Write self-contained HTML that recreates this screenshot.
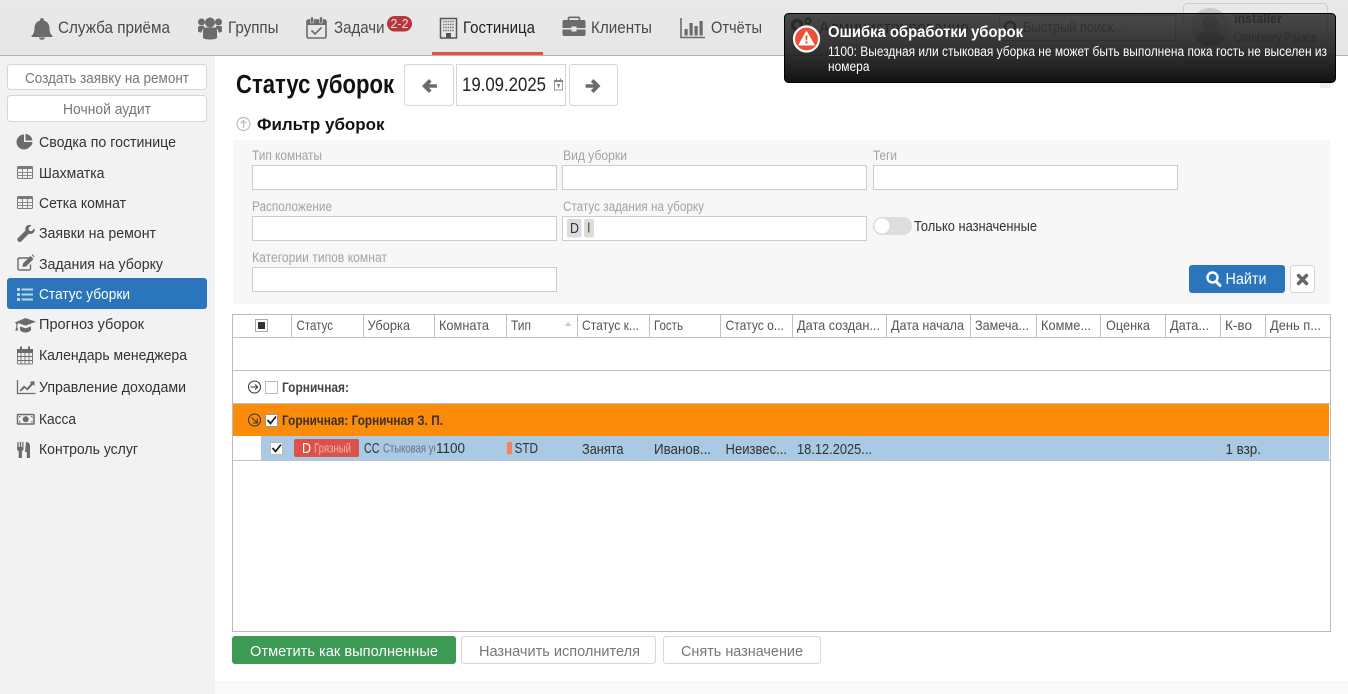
<!DOCTYPE html>
<html lang="ru"><head><meta charset="utf-8"><title>Статус уборок</title>
<style>
html,body{margin:0;padding:0;background:#fff;width:1348px;height:694px;overflow:hidden}
svg{display:block}
text{font-family:"Liberation Sans",sans-serif;font-size:14px;fill:#333;white-space:pre}
.nav{font-size:17px;fill:#4a4a4a}
.side{font-size:15px;fill:#333}
.btn{font-size:15px;fill:#777}
.lab{font-size:13.5px;fill:#a3a3a3}
.th{font-size:14px;fill:#555}
.td{font-size:14.5px;fill:#333}
.i{fill:#6b6b6b}
.s{fill:none;stroke:#6b6b6b}
.box{fill:#fff;stroke:#d6d6d6}
.inp{fill:#fff;stroke:#ccc}
.line{stroke:#c2c2c2;stroke-width:1}
</style></head>
<body>
<svg xmlns="http://www.w3.org/2000/svg" width="1348" height="694" viewBox="0 0 1348 694">
<defs>
<linearGradient id="hd" x1="0" y1="0" x2="0" y2="1"><stop offset="0" stop-color="#e9e9e9"/><stop offset="1" stop-color="#e6e6e6"/></linearGradient>
<linearGradient id="toast" x1="0" y1="0" x2="0" y2="1"><stop offset="0" stop-color="#2b2b2b" stop-opacity=".84"/><stop offset=".55" stop-color="#1c1c1c" stop-opacity=".9"/><stop offset="1" stop-color="#000" stop-opacity=".93"/></linearGradient>
<clipPath id="cl"><rect x="380" y="436" width="55" height="24"/></clipPath>
<symbol id="grid" viewBox="0 0 16 13"><rect x=".5" y=".5" width="15" height="12" rx="1" fill="none" stroke="#7a7a7a"/><path d="M0 1h16v2H0z" fill="#7a7a7a"/><path d="M5.500 3v10M10.500 3v10M0 6.500h16M0 9.500h16" stroke="#8a8a8a" fill="none"/></symbol>
</defs>

<!-- header -->
<rect width="1348" height="55" fill="url(#hd)"/>
<rect y="55" width="1348" height="1" fill="#b3b3b3"/>
<rect x="432" y="52" width="111" height="3" fill="#e9503e"/>

<!-- bell -->
<path class="i" d="M42 18c-1.100 0-1.900.8-1.900 1.900v.6c-3.600 1-5.600 3.900-5.600 7.800 0 3.700-.9 5.900-3 7.700v1h21v-1c-2.100-1.800-3-4-3-7.700 0-3.900-2-6.800-5.600-7.800v-.6c0-1.100-.8-1.900-1.900-1.900zM39 37.500a3 2.300 0 0 0 6 0z"/>
<text class="nav" x="58" y="33" textLength="112" lengthAdjust="spacingAndGlyphs">Служба приёма</text>
<!-- users -->
<g class="i"><circle cx="210" cy="22.500" r="5"/><circle cx="201.500" cy="22" r="3.500"/><circle cx="218.500" cy="22" r="3.500"/><path d="M203 31c0-2.500 2-3.500 3.500-3.500h7c1.500 0 3.500 1 3.500 3.500v7c-1 1-3.500 1.500-7 1.500s-6-.5-7-1.500zM198 27c0-.8 1-1 2-1h3.800c.3 1 .8 1.500 1.200 2-2 .7-3.300 2-3.500 4.500-2 0-3.500-.5-3.500-1.500zM222 27c0-.8-1-1-2-1h-3.800c-.3 1-.8 1.500-1.200 2 2 .7 3.300 2 3.500 4.500 2 0 3.500-.5 3.500-1.500z"/></g>
<text class="nav" x="228" y="33" textLength="50.500" lengthAdjust="spacingAndGlyphs">Группы</text>
<!-- tasks -->
<g><rect x="307" y="20" width="19" height="18" rx="1.500" fill="none" stroke="#6b6b6b" stroke-width="1.600"/><path class="i" d="M307 20h19v5h-19z"/><rect x="310.500" y="17" width="3" height="6" rx="1" fill="#6b6b6b" stroke="#e8e8e8" stroke-width=".6"/><rect x="319.500" y="17" width="3" height="6" rx="1" fill="#6b6b6b" stroke="#e8e8e8" stroke-width=".6"/><path class="s" stroke-width="1.600" d="M311.500 30.500l3.500 3.500 6.500-6.500"/></g>
<text class="nav" x="334" y="33" textLength="50.500" lengthAdjust="spacingAndGlyphs">Задачи</text>
<rect x="387" y="16" width="25" height="15.500" rx="7.700" fill="#b5363c"/>
<text x="390.500" y="28" textLength="18" lengthAdjust="spacingAndGlyphs" style="font-size:13px;fill:#f6dcdc">2-2</text>
<!-- hotel -->
<g><rect x="440.500" y="18.500" width="16" height="19.500" fill="#e8e8e8" stroke="#555" stroke-width="1.500"/><path d="M443 21.500h11M443 24.500h11M443 27.500h11M443 30.500h11" stroke="#777" stroke-width="1.500" stroke-dasharray="1.500 .8"/><rect x="446" y="33" width="5" height="5" fill="#555"/></g>
<text class="nav" x="463" y="33" textLength="72" lengthAdjust="spacingAndGlyphs" style="fill:#222">Гостиница</text>
<!-- briefcase -->
<g><path class="i" d="M563 22.500c0-1 .8-1.500 1.500-1.500h20c.8 0 1.500.5 1.500 1.500v6.500h-9v-1.500h-5v1.500h-9zM563 30.500h9v2h5v-2h9v5c0 .8-.7 1.500-1.500 1.500h-20c-.7 0-1.500-.7-1.500-1.500z" transform="translate(-.5 -1)"/><path class="s" stroke-width="1.700" d="M569 20v-2c0-.8.500-1.200 1.200-1.200h8.600c.7 0 1.200.4 1.200 1.200v2" transform="translate(-.5 .5)"/></g>
<text class="nav" x="591" y="33" textLength="61" lengthAdjust="spacingAndGlyphs">Клиенты</text>
<!-- chart -->
<path class="s" stroke-width="1.600" d="M681 18v19.500h24"/>
<path class="i" d="M684.500 29h3.200v6.500h-3.200zM689.500 23h3.200v12.500h-3.200zM694.500 26h3.200v9.500h-3.200zM699.500 21h3.200v14.500h-3.200z"/>
<text class="nav" x="711" y="33" textLength="51" lengthAdjust="spacingAndGlyphs">Отчёты</text>

<!-- elements beneath toast -->
<circle cx="797" cy="25" r="4.500" fill="none" stroke="#333" stroke-width="3.500"/>
<circle cx="808" cy="21" r="2.500" fill="none" stroke="#333" stroke-width="2"/>
<circle cx="808" cy="31" r="2.500" fill="none" stroke="#333" stroke-width="2"/>
<text class="nav" x="819" y="33" textLength="150" lengthAdjust="spacingAndGlyphs" style="fill:#333">Администрирование</text>
<rect x="999.500" y="15.500" width="176" height="25" class="inp" style="stroke:#aaa;fill:#f4f4f4"/>
<circle cx="1010" cy="27" r="5" fill="none" stroke="#444" stroke-width="2.500"/>
<text x="1023" y="32" textLength="101" lengthAdjust="spacingAndGlyphs" style="fill:#777;font-size:14.500px">Быстрый поиск...</text>
<rect x="1183.500" y="3.500" width="144" height="60" rx="4" fill="#e8e8e8" stroke="#ccc"/>
<circle cx="1210" cy="27" r="19" fill="#c9c9c9"/>
<circle cx="1210" cy="23" r="8" fill="#9e9e9e"/><path d="M1196 40c1-7 7-9 14-9s13 2 14 9c-4 4-9 6-14 6s-10-2-14-6z" fill="#9e9e9e"/>
<text x="1234" y="23" textLength="48" lengthAdjust="spacingAndGlyphs" style="font-weight:700;font-size:14px;fill:#444">installer</text>
<text x="1234" y="42" textLength="83" lengthAdjust="spacingAndGlyphs" style="font-size:13.500px;fill:#777">Cranberry Palace</text>

<!-- sidebar -->
<rect y="56" width="215" height="638" fill="#f2f2f2"/>
<rect x="7.500" y="64.500" width="199" height="25" rx="3" class="box"/>
<text class="btn" x="25" y="83" textLength="164" lengthAdjust="spacingAndGlyphs">Создать заявку на ремонт</text>
<rect x="7.500" y="95.500" width="199" height="26" rx="3" class="box"/>
<text class="btn" x="63" y="114" textLength="88" lengthAdjust="spacingAndGlyphs">Ночной аудит</text>
<rect x="7" y="278" width="200" height="31" rx="3" fill="#2a75bb"/>

<path class="i" d="M24 134.500v7.500h7.500a7.500 7.500 0 1 1-7.500-7.500zM25.500 134a7.500 7.500 0 0 1 7 6.500h-7zM32.500 142a7.500 7.500 0 0 1-2 4.500l-4.500-4.500z"/>
<text class="side" x="39" y="147" textLength="137" lengthAdjust="spacingAndGlyphs">Сводка по гостинице</text>
<use href="#grid" x="17" y="166" width="16" height="13"/>
<text class="side" x="39" y="178" textLength="65.500" lengthAdjust="spacingAndGlyphs">Шахматка</text>
<use href="#grid" x="17" y="196" width="16" height="13"/>
<text class="side" x="39" y="208" textLength="87" lengthAdjust="spacingAndGlyphs">Сетка комнат</text>
<path class="i" d="M17.500 238.500l8-8c-.6-2.500.4-5 3-5.500 1-.2 2-.1 3 .3l-3 2.800.6 2.500 2.400.6 3-3c.4 1.200.3 2.300-.2 3.400-1 2-3.300 2.800-5.400 2.200l-8 8c-1.500 1-4.400-1-3.400-3.300z"/>
<text class="side" x="39" y="238" textLength="117" lengthAdjust="spacingAndGlyphs">Заявки на ремонт</text>
<path class="s" stroke-width="1.400" stroke="#808080" d="M29 258h-9.500c-1 0-1.500.6-1.500 1.500v9c0 1 .5 1.500 1.500 1.500h9.500c1 0 1.500-.5 1.500-1.500v-4"/>
<path class="i" d="M23 263.500l7.500-7.500 3 3-7.500 7.500-3.500.5zM31.500 255l1-.6 2 2 -.6 1z"/>
<text class="side" x="39" y="269" textLength="124" lengthAdjust="spacingAndGlyphs">Задания на уборку</text>
<path d="M17 288h3v3h-3zM21.500 288.500H33v2H21.500zM17 293h3v3h-3zM21.500 293.500H33v2H21.500zM17 298h3v3h-3zM21.500 298.500H33v2H21.500z" fill="#bcd6ef"/>
<text x="39" y="299" textLength="91" lengthAdjust="spacingAndGlyphs" style="fill:#fff;font-size:15px">Статус уборки</text>
<path class="i" d="M26 318l10.500 3.800-10.500 3.800-7-2.500-1.200 1.500v2.400l1 3.500h-3l1-3.500v-3l-1.500-1.500zM20.500 326.500l5.500 1.800 5.500-1.800v3.500c-1 1.500-3 2.500-5.500 2.500s-4.500-1-5.500-2.500z" transform="translate(-.5 0)"/>
<text class="side" x="39" y="329" textLength="105" lengthAdjust="spacingAndGlyphs">Прогноз уборок</text>
<g><rect x="17.500" y="349.500" width="15" height="14.500" rx="1" fill="none" stroke="#7a7a7a"/><path class="i" d="M17 349h16v4H17zM20 346.500h2V351h-2zM28 346.500h2V351h-2z"/><path class="s" stroke-width=".9" d="M21 353v11M25 353v11M29 353v11M18 356.500h14M18 360.500h14"/></g>
<text class="side" x="39" y="360" textLength="148" lengthAdjust="spacingAndGlyphs">Календарь менеджера</text>
<path class="s" stroke-width="1.300" d="M17.500 380v13.500h18"/><path class="i" d="M19.500 390.500l4.500-5 3 2.500 4-4.500-1.500-1.500 5-1v5l-1.500-1.500-5.500 6-3-2.500-3.500 3.500z"/>
<text class="side" x="39" y="392" textLength="147" lengthAdjust="spacingAndGlyphs">Управление доходами</text>
<rect x="17.500" y="414.500" width="16.500" height="9.500" rx=".8" fill="none" stroke="#6b6b6b" stroke-width="1.500"/><circle cx="25.700" cy="419.200" r="3" class="i"/><path class="i" d="M19 416h2l-2 2zM32.500 416h-2l2 2zM19 422.500h2l-2-2zM32.500 422.500h-2l2-2z"/>
<text class="side" x="39" y="424" textLength="37" lengthAdjust="spacingAndGlyphs">Касса</text>
<path class="i" d="M17.500 442h1.200v5h1.100v-5h1.400v5h1.100v-5h1.200v7c0 1-.7 1.800-1.600 2v7h-3.200v-7c-.9-.2-1.600-1-1.600-2zM26 442c2.500 0 4 1.500 4 4v12h-3.200v-6h-1.800z"/>
<text class="side" x="39" y="454" textLength="99" lengthAdjust="spacingAndGlyphs">Контроль услуг</text>

<!-- title bar -->
<text x="236" y="93" textLength="158" lengthAdjust="spacingAndGlyphs" style="font-size:25.500px;font-weight:700;fill:#111">Статус уборок</text>
<rect x="404.500" y="64.500" width="49" height="41" rx="3" class="box"/>
<path class="i" d="M422 86l7-7 2.700 2.700-2.800 2.600h8v3.400h-8l2.800 2.600-2.700 2.700z"/>
<rect x="456.500" y="64.500" width="109" height="41" class="box"/>
<text x="462" y="91" textLength="84" lengthAdjust="spacingAndGlyphs" style="font-size:19px;fill:#222">19.09.2025</text>
<rect x="554.500" y="80.500" width="8" height="9.500" fill="none" stroke="#999"/><path d="M554 80h9v2h-9zM556 78.500h1v2h-1zM560 78.500h1v2h-1zM557 84h3v1l-1.500 3.500" fill="#888"/>
<rect x="569.500" y="64.500" width="48" height="41" rx="3" class="box"/>
<path class="i" d="M600.500 86l-7-7-2.700 2.700 2.800 2.600h-8v3.400h8l-2.800 2.600 2.700 2.700z"/>

<!-- filter -->
<circle cx="243.500" cy="124" r="6.500" fill="none" stroke="#bbb" stroke-width="1.200"/>
<path d="M243.500 128v-7M240.500 123.500l3-3 3 3" fill="none" stroke="#bbb" stroke-width="1.200"/>
<text x="257" y="130" textLength="127.500" lengthAdjust="spacingAndGlyphs" style="font-size:17px;font-weight:700;fill:#111">Фильтр уборок</text>
<rect x="233" y="140" width="1097" height="164" fill="#f7f7f7"/>
<text class="lab" x="252" y="160" textLength="70" lengthAdjust="spacingAndGlyphs">Тип комнаты</text>
<text class="lab" x="563" y="160" textLength="64" lengthAdjust="spacingAndGlyphs">Вид уборки</text>
<text class="lab" x="873" y="160" textLength="24" lengthAdjust="spacingAndGlyphs">Теги</text>
<rect x="252.500" y="165.500" width="304" height="24" class="inp"/>
<rect x="562.500" y="165.500" width="304" height="24" class="inp"/>
<rect x="873.500" y="165.500" width="304" height="24" class="inp"/>
<text class="lab" x="252" y="211" textLength="80" lengthAdjust="spacingAndGlyphs">Расположение</text>
<text class="lab" x="563" y="211" textLength="141" lengthAdjust="spacingAndGlyphs">Статус задания на уборку</text>
<rect x="252.500" y="216.500" width="304" height="24" class="inp"/>
<rect x="562.500" y="216.500" width="304" height="24" class="inp"/>
<rect x="567" y="219" width="14.500" height="18.500" rx="2" fill="#dcdcdc"/>
<rect x="584" y="219" width="10" height="18.500" rx="2" fill="#dcdcdc"/>
<text x="570" y="233" textLength="9" lengthAdjust="spacingAndGlyphs" style="font-size:14.500px">D</text>
<rect x="588" y="222.500" width="1.400" height="10" fill="#7a5a3c"/>
<rect x="873" y="217" width="39" height="18" rx="9" fill="#dedede"/>
<circle cx="882" cy="226" r="8" fill="#fff" stroke="#ccc" stroke-width=".6"/>
<text x="914" y="231" textLength="123" lengthAdjust="spacingAndGlyphs" style="font-size:14.500px;fill:#333">Только назначенные</text>
<text class="lab" x="252" y="262" textLength="135" lengthAdjust="spacingAndGlyphs">Категории типов комнат</text>
<rect x="252.500" y="267.500" width="304" height="24" class="inp"/>
<rect x="1189" y="265" width="96" height="28" rx="3" fill="#2a75bb"/>
<circle cx="1212.500" cy="277.500" r="5" fill="none" stroke="#fff" stroke-width="2.400"/><path d="M1216 281.500l4 4" stroke="#fff" stroke-width="3" stroke-linecap="round"/>
<text x="1225.500" y="284" textLength="41" lengthAdjust="spacingAndGlyphs" style="font-size:16px;fill:#fff">Найти</text>
<rect x="1290.500" y="265.500" width="24" height="27" rx="3" class="box"/>
<path d="M1298.500 275.500l8 8M1306.500 275.500l-8 8" stroke="#666" stroke-width="3.400" stroke-linecap="round"/>

<!-- table -->
<rect x="232.500" y="314.500" width="1098" height="317" fill="#fff" stroke="#bbb"/>
<path class="line" d="M233 337.500h1097M233 370.500h1097M233 403.500h1097M233 460.500h1097M291.500 315v22M363.500 315v22M434.500 315v22M506.500 315v22M577.500 315v22M649.500 315v22M720.500 315v22M792.500 315v22M886.500 315v22M970.500 315v22M1036.500 315v22M1100.500 315v22M1165.500 315v22M1220.500 315v22M1265.500 315v22"/>
<rect x="255.500" y="319.500" width="12" height="12" fill="#fff" stroke="#aaa"/><rect x="258" y="322" width="7" height="7" fill="#333"/>
<text class="th" x="296.500" y="330" textLength="36.500" lengthAdjust="spacingAndGlyphs">Статус</text>
<text class="th" x="367.500" y="330" textLength="42.500" lengthAdjust="spacingAndGlyphs">Уборка</text>
<text class="th" x="439" y="330" textLength="50" lengthAdjust="spacingAndGlyphs">Комната</text>
<text class="th" x="511" y="330" textLength="20" lengthAdjust="spacingAndGlyphs">Тип</text>
<path d="M564.500 326l3.600-4 3.600 4z" fill="#ccc"/>
<text class="th" x="582" y="330" textLength="57" lengthAdjust="spacingAndGlyphs">Статус к...</text>
<text class="th" x="654" y="330" textLength="29" lengthAdjust="spacingAndGlyphs">Гость</text>
<text class="th" x="725.500" y="330" textLength="58.500" lengthAdjust="spacingAndGlyphs">Статус о...</text>
<text class="th" x="797" y="330" textLength="83" lengthAdjust="spacingAndGlyphs">Дата создан...</text>
<text class="th" x="891" y="330" textLength="73" lengthAdjust="spacingAndGlyphs">Дата начала</text>
<text class="th" x="975" y="330" textLength="54" lengthAdjust="spacingAndGlyphs">Замеча...</text>
<text class="th" x="1041" y="330" textLength="50" lengthAdjust="spacingAndGlyphs">Комме...</text>
<text class="th" x="1106" y="330" textLength="44" lengthAdjust="spacingAndGlyphs">Оценка</text>
<text class="th" x="1170" y="330" textLength="39" lengthAdjust="spacingAndGlyphs">Дата...</text>
<text class="th" x="1225" y="330" textLength="27" lengthAdjust="spacingAndGlyphs">К-во</text>
<text class="th" x="1270" y="330" textLength="51" lengthAdjust="spacingAndGlyphs">День п...</text>

<!-- group 1 -->
<circle cx="254.500" cy="387" r="6" fill="none" stroke="#333" stroke-width="1"/>
<path d="M250.500 387h7M255 384.500l2.700 2.500-2.700 2.500" fill="none" stroke="#333"/>
<rect x="265.500" y="381.500" width="12" height="12" fill="#fff" stroke="#bbb"/>
<text x="282" y="392" textLength="67" lengthAdjust="spacingAndGlyphs" style="font-size:13.500px;font-weight:700;fill:#444">Горничная:</text>

<!-- group 2 -->
<rect x="233" y="404" width="1096" height="32" fill="#fa8c0a"/>
<circle cx="254.500" cy="420" r="6" fill="none" stroke="#333" stroke-width="1"/>
<path d="M251.500 417.500l5.500 5M257.300 418.500v4.500h-4.500" fill="none" stroke="#333"/>
<rect x="265.500" y="414.500" width="12" height="12" fill="#fff" stroke="#999"/>
<path d="M267.500 420l3 3.500 5.500-7" fill="none" stroke="#222" stroke-width="1.800"/>
<text x="282" y="425" textLength="161" lengthAdjust="spacingAndGlyphs" style="font-size:13.500px;font-weight:700;fill:#3b3026">Горничная: Горничная З. П.</text>

<!-- data row -->
<rect x="261" y="436" width="1068" height="24" fill="#a9c9e4"/>
<rect x="270.500" y="442.500" width="12" height="12" fill="#fff" stroke="#bbb"/>
<path d="M272.500 448l3 3.500 5.500-7" fill="none" stroke="#222" stroke-width="1.800"/>
<rect x="294" y="439" width="65" height="18" rx="2" fill="#d9534a"/>
<text x="302" y="453" textLength="9" lengthAdjust="spacingAndGlyphs" style="font-size:15px;fill:#fff">D</text>
<text x="314" y="452.500" textLength="37" lengthAdjust="spacingAndGlyphs" style="font-size:13px;fill:#f2b3a9">Грязный</text>
<text class="td" x="364" y="453" textLength="15.500" lengthAdjust="spacingAndGlyphs">CC</text>
<g clip-path="url(#cl)"><text x="383" y="452.500" textLength="56" lengthAdjust="spacingAndGlyphs" style="font-size:13px;fill:#5f7488">Стыковая уб</text></g>
<text class="td" x="436" y="453" textLength="29" lengthAdjust="spacingAndGlyphs">1100</text>
<rect x="507" y="442" width="5" height="12.500" rx="1.500" fill="#ee8760"/>
<text class="td" x="514.500" y="453" textLength="23.500" lengthAdjust="spacingAndGlyphs">STD</text>
<text class="td" x="582" y="454" textLength="41.500" lengthAdjust="spacingAndGlyphs">Занята</text>
<text class="td" x="654" y="454" textLength="57" lengthAdjust="spacingAndGlyphs">Иванов...</text>
<text class="td" x="725.500" y="454" textLength="61.500" lengthAdjust="spacingAndGlyphs">Неизвес...</text>
<text class="td" x="797" y="454" textLength="75" lengthAdjust="spacingAndGlyphs">18.12.2025...</text>
<text class="td" x="1225.500" y="454" textLength="35.500" lengthAdjust="spacingAndGlyphs">1 взр.</text>

<!-- bottom buttons -->
<rect x="232" y="636" width="224" height="28" rx="3" fill="#3c9a54"/>
<text x="250" y="656" textLength="188" lengthAdjust="spacingAndGlyphs" style="font-size:15px;fill:#fff">Отметить как выполненные</text>
<rect x="461.500" y="636.500" width="194" height="27" rx="3" class="box"/>
<text class="btn" x="479" y="656" textLength="161" lengthAdjust="spacingAndGlyphs">Назначить исполнителя</text>
<rect x="663.500" y="636.500" width="157" height="27" rx="3" class="box"/>
<text class="btn" x="681" y="656" textLength="122" lengthAdjust="spacingAndGlyphs">Снять назначение</text>

<!-- footer -->
<rect x="215" y="682" width="1133" height="12" fill="#f9f9f9"/>
<rect x="215" y="682" width="1133" height="1" fill="#eee"/>
<rect x="1320" y="83" width="11" height="5" fill="#eee"/>

<!-- toast -->
<rect x="784.500" y="13.500" width="551" height="69" rx="4" fill="url(#toast)" stroke="#000"/>
<circle cx="806.500" cy="39" r="12.500" fill="#ee4f38" stroke="#fff" stroke-width="2.200"/>
<path d="M806.500 31.500l7.700 13.500h-15.400z" fill="#fff" stroke="#fff" stroke-linejoin="round"/>
<path d="M805.500 35.500h2l-.3 5h-1.400zM805.500 41.500h2v2h-2z" fill="#ee4f38"/>
<text x="828" y="37" textLength="195" lengthAdjust="spacingAndGlyphs" style="font-size:16px;font-weight:700;fill:#fff">Ошибка обработки уборок</text>
<text x="828" y="56" textLength="499" lengthAdjust="spacingAndGlyphs" style="font-size:13.500px;fill:#fff">1100: Выездная или стыковая уборка не может быть выполнена пока гость не выселен из</text>
<text x="828" y="71" textLength="41.500" lengthAdjust="spacingAndGlyphs" style="font-size:13.500px;fill:#fff">номера</text>
</svg>
</body></html>
